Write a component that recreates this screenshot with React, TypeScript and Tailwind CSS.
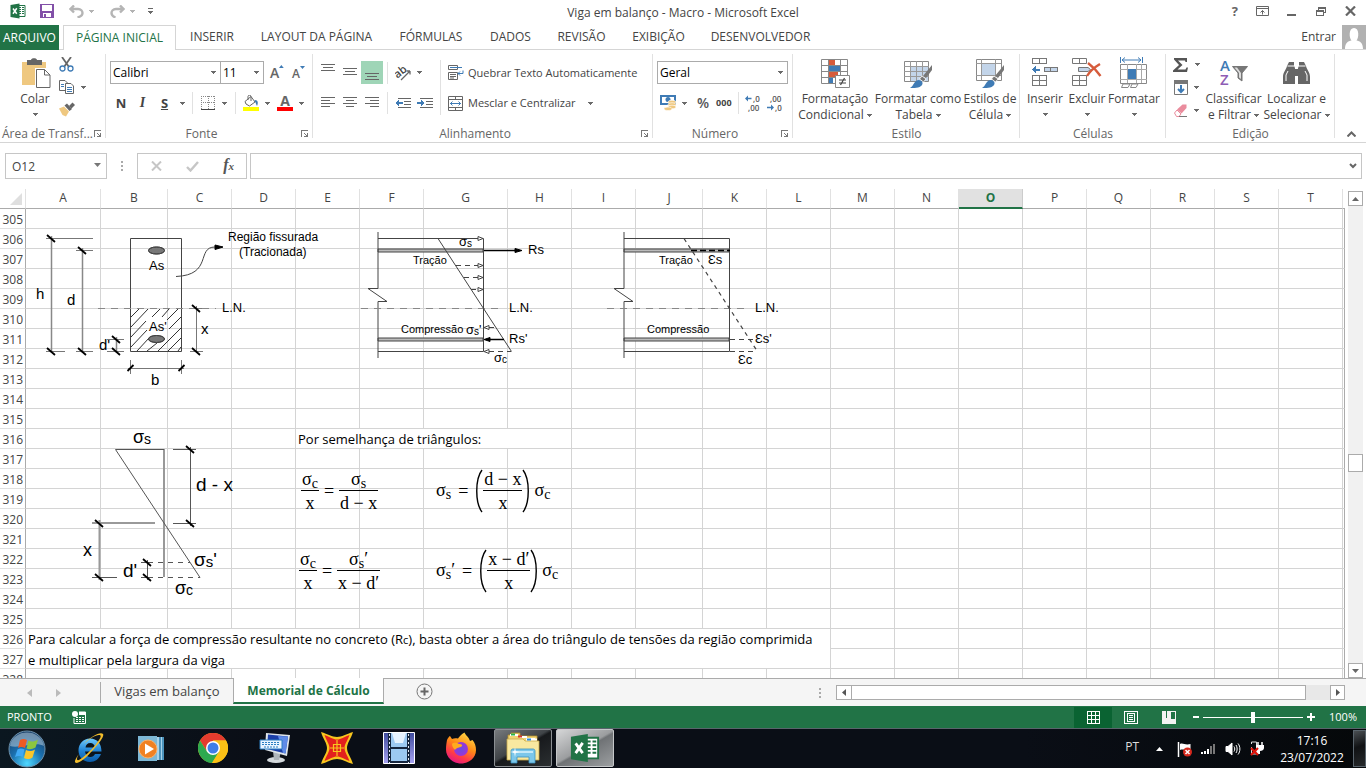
import React from "react";

type Kids = { children?: React.ReactNode };

/* ---------- small shared pieces ---------- */

const Caret = ({ className = "" }: { className?: string }) => (
  <svg className={"shrink-0 " + className} width="5" height="3" viewBox="0 0 5 3" shapeRendering="crispEdges" aria-hidden="true">
    <path d="M0 0H5V1H4V2H3V3H2V2H1V1H0Z" fill="#6a6a6a" />
  </svg>
);

const Launcher = ({ label }: { label: string }) => (
  <button aria-label={label} className="absolute right-[5px] bottom-[5px]">
    <svg className="block" width="7" height="7" viewBox="0 0 7 7" shapeRendering="crispEdges">
      <path d="M0 7V0H7V1H1V7ZM3 3H4V4H5V5H6V3H7V7H3V6H5V5H4V4H3Z" fill="#777" />
    </svg>
  </button>
);

const Group = ({ label, width, launcher, children }: Kids & { label: string; width: string; launcher?: boolean }) => (
  <section aria-label={label} className={"relative flex shrink-0 flex-col " + width}>
    <div className="flex h-[76px]">{children}</div>
    <div className={"text-center leading-4 whitespace-nowrap text-[#666] " + (launcher ? "pr-[18px] pl-[2px]" : "px-1")}>{label}</div>
    {launcher && <Launcher label={"Opções de " + label} />}
    <span className="absolute top-1 right-0 h-[84px] w-px bg-[#e1e1e1]" />
  </section>
);

const Sep = ({ className = "h-[22px]" }: { className?: string }) => <span className={"w-px shrink-0 bg-[#e1e1e1] " + className} />;

const BigButton = ({ icon, lines, width, caretInline }: { icon: React.ReactNode; lines: string[]; width: string; caretInline?: boolean }) => (
  <button className={"flex shrink-0 flex-col items-center whitespace-nowrap leading-4 " + width}>
    <span className="flex h-[41px] items-center pb-1 pt-2">{icon}</span>
    {lines.map((l, i) => (
      <span key={l} className="flex items-center gap-[3px]">
        {l}
        {caretInline && i === lines.length - 1 && <Caret />}
      </span>
    ))}
    {!caretInline && <Caret className="mt-[6px]" />}
  </button>
);

const Lines = ({ rows, className = "" }: { rows: [number, number][]; className?: string }) => (
  <svg className={className} width="14" height="14" viewBox="0 0 14 14" shapeRendering="crispEdges">
    {rows.map(([x, w], i) => (
      <rect key={i} x={x} y={i * 3 + 1} width={w} height="1" fill="#666" />
    ))}
  </svg>
);

const ExcelLogo = ({ size }: { size: number }) => (
  <svg width={size} height={size} viewBox="0 0 32 32">
    <path d="M17 5H30V27H17Z" fill="#fff" stroke="#217346" strokeWidth="2" />
    <path d="M18 8H22V10H18ZM24 8H28V10H24ZM18 12H22V14H18ZM24 12H28V14H24ZM18 16H22V18H18ZM24 16H28V18H24ZM18 20H22V22H18ZM24 20H28V22H24Z" fill="#217346" />
    <path d="M1 4L19 1V31L1 28Z" fill="#217346" />
    <path d="M6 11L13.500 21.500M13.500 10.500L6 21.500" stroke="#fff" strokeWidth="3" />
  </svg>
);

/* ---------- title bar ---------- */

const TitleBar = () => (
  <header className="relative flex h-[25px] shrink-0 items-start pt-[3px]">
    <div className="flex h-4 items-center pl-[10px]">
      <ExcelLogo size={16} />
      <button aria-label="Salvar" className="ml-[14px]">
        <svg width="14" height="14" viewBox="0 0 14 14">
          <path d="M0 0H14V14H0Z" fill="#8250a8" />
          <path d="M2 1H12V7H2Z" fill="#fff" />
          <path d="M3 9H11V13H3Z" fill="#fff" />
          <path d="M4 10H6V13H4Z" fill="#8250a8" />
        </svg>
      </button>
      <button aria-label="Desfazer" className="ml-[15px] flex items-center gap-[5px]">
        <svg width="15" height="13" viewBox="0 0 15 13" fill="none" stroke="#b5b5b5" strokeWidth="2.400">
          <path d="M5 0.500L1.500 4L5 7.500M2 4H9C12 4 13.500 6 13.500 8C13.500 10 12 11.500 8.500 12.500" />
        </svg>
        <Caret className="opacity-50" />
      </button>
      <button aria-label="Refazer" className="ml-4 flex items-center gap-[5px]">
        <svg width="15" height="13" viewBox="0 0 15 13" fill="none" stroke="#b5b5b5" strokeWidth="2.400">
          <path d="M10 0.500L13.500 4L10 7.500M13 4H6C3 4 1.500 6 1.500 8C1.500 10 3 11.500 5.500 12.500" />
        </svg>
        <Caret className="opacity-50" />
      </button>
      <button aria-label="Personalizar barra" className="ml-[13px] flex flex-col gap-[2px]">
        <span className="h-px w-[5px] bg-[#666]" />
        <Caret />
      </button>
    </div>
    <h1 className="pointer-events-none absolute inset-x-0 top-[5px] text-center leading-4 text-[#444]">Viga em balanço - Macro - Microsoft Excel</h1>
    <div className="ml-auto flex h-4 items-center pr-[10px] text-[#666]">
      <button aria-label="Ajuda" className="text-[13px] leading-4 font-bold">?</button>
      <button aria-label="Opções de exibição" className="ml-[18px]">
        <svg width="13" height="10" viewBox="0 0 13 10" fill="none" stroke="#666">
          <path d="M0.500 0.500H12.500V9.500H0.500ZM1 2.500H12M6.500 8.500V4.500M4.500 6.500L6.500 4.500L8.500 6.500" />
        </svg>
      </button>
      <button aria-label="Minimizar" className="ml-[18px] h-[11px] pt-2">
        <span className="block h-[2px] w-[9px] bg-[#666]" />
      </button>
      <button aria-label="Restaurar" className="ml-5">
        <svg width="10" height="9" viewBox="0 0 10 9" fill="none" stroke="#666" shapeRendering="crispEdges">
          <path d="M0.500 3.500H7.500V8.500H0.500ZM0 4.500H8M2.500 3V0.500H9.500V5.500H8M2 1.500H10" />
        </svg>
      </button>
      <button aria-label="Fechar" className="ml-[19px]">
        <svg width="11" height="10" viewBox="0 0 11 10" stroke="#666" strokeWidth="2.200">
          <path d="M1 0.500L10 9.500M10 0.500L1 9.500" />
        </svg>
      </button>
    </div>
  </header>
);

/* ---------- ribbon tabs ---------- */

const tabs: [string, string][] = [
  ["INSERIR", "w-[72px]"],
  ["LAYOUT DA PÁGINA", "w-[137px]"],
  ["FÓRMULAS", "w-[92px]"],
  ["DADOS", "w-[67px]"],
  ["REVISÃO", "w-[75px]"],
  ["EXIBIÇÃO", "w-[79px]"],
  ["DESENVOLVEDOR", "w-[125px]"],
];

const RibbonTabs = () => (
  <nav className="flex h-[25px] shrink-0 border-b border-[#d5d5d5] whitespace-nowrap text-[#444]">
    <button className="h-[25px] w-[59px] shrink-0 bg-[#217346] text-white">ARQUIVO</button>
    <button className="ml-1 h-[25px] w-[113px] shrink-0 border border-b-0 border-[#d5d5d5] bg-white text-[#217346]">PÁGINA INICIAL</button>
    {tabs.map(([t, w]) => (
      <button key={t} className={"shrink-0 " + w}>{t}</button>
    ))}
    <button className="ml-auto pr-[6px]">Entrar</button>
    <svg className="shrink-0" width="24" height="24" viewBox="0 0 24 24">
      <path d="M0 0H24V24H0Z" fill="#b1b1b1" />
      <path d="M3 24C3 18 6 16 9.500 15.500C7 13 6.500 3 12 3C17.500 3 17 13 14.500 15.500C18 16 21 18 21 24Z" fill="#fff" />
    </svg>
  </nav>
);

/* ---------- ribbon ---------- */

const Combo = ({ value, label, className }: { value: string; label: string; className: string }) => (
  <span className={"relative block shrink-0 " + className}>
    <select aria-label={label} defaultValue={value} className="block h-[23px] w-full appearance-none border border-[#ababab] bg-white pl-[2px] text-black">
      <option>{value}</option>
    </select>
    <Caret className="pointer-events-none absolute top-[10px] right-[5px]" />
  </span>
);

const CellGridIcon = ({ fill }: { fill: React.ReactNode }) => (
  <svg width="30" height="30" viewBox="0 0 30 30">
    {fill}
  </svg>
);

const BrushOverlay = () => (
  <g>
    <path d="M29 7V12L23 20L20 18Z" fill="#777" />
    <path d="M19 18L23 21L20.500 24L16.500 21Z" fill="#777" stroke="#fff" strokeWidth="0.800" />
    <path d="M7 30C11 28 11 22 16 22C20 22.500 20.500 26 18 28C15 30.500 10 30 7 30Z" fill="#3f7bb5" />
  </g>
);

const Ribbon = () => (
  <div className="flex h-[93px] shrink-0 overflow-hidden border-b border-[#d5d5d5] text-[#444]">
    <Group label="Área de Transf..." width="w-[106px]" launcher>
      <button className="ml-[18px] flex w-[34px] flex-col items-center leading-4">
        <span className="flex h-[41px] items-center pt-2 pb-1 pl-[3px]">
          <svg width="29" height="30" viewBox="0 0 29 30">
            <path d="M0 4H24V27H0Z" fill="#efc880" />
            <path d="M5 2H9C9 -0.500 15 -0.500 15 2H20V7H5Z" fill="#666" />
            <path d="M13 10H24V28H13Z" fill="#fff" />
            <path d="M14.500 11.500H22.500L28 17V29.500H14.500Z" fill="#fff" stroke="#666" />
            <path d="M22.500 11.500V17H28" fill="none" stroke="#666" />
          </svg>
        </span>
        Colar
        <Caret className="mt-[6px]" />
      </button>
      <div className="ml-[7px] flex flex-col items-start">
        <button aria-label="Recortar" className="mt-[7px] h-[15px]">
          <svg width="15" height="15" viewBox="0 0 15 15" fill="none">
            <path d="M3 0L10 10M12 0L5 10" stroke="#666" strokeWidth="1.800" />
            <circle cx="3.500" cy="11.500" r="2.500" stroke="#3f7bb5" strokeWidth="1.300" />
            <circle cx="11.500" cy="11.500" r="2.500" stroke="#3f7bb5" strokeWidth="1.300" />
          </svg>
        </button>
        <button aria-label="Copiar" className="mt-2 flex items-center gap-[7px]">
          <svg width="15" height="14" viewBox="0 0 15 14" fill="#fff" stroke="#666">
            <path d="M0.500 0.500H6L8.500 3V10.500H0.500Z" />
            <path d="M2 4.500H5M2 6.500H5" stroke="#3f7bb5" />
            <path d="M6.500 3.500H12L14.500 6V13.500H6.500Z" />
            <path d="M8 7.500H13M8 9.500H13M8 11.500H13" stroke="#3f7bb5" />
          </svg>
          <Caret />
        </button>
        <button aria-label="Pincel de Formatação" className="mt-2">
          <svg width="16" height="15" viewBox="0 0 16 15">
            <path d="M0 6.500L5 4.500L10 9.500L7 14.500L3.500 13Z" fill="#efc880" />
            <path d="M5.500 3.500L8 1.500L13 7L10.500 9Z" fill="#666" />
            <path d="M10 4L13.500 0.500L16 3L12.500 6.500Z" fill="#666" />
          </svg>
        </button>
      </div>
    </Group>

    <Group label="Fonte" width="w-[207px]" launcher>
      <div className="flex flex-col gap-2 pt-[11px] pl-1">
        <div className="flex h-[23px] items-center">
          <Combo value="Calibri" label="Fonte" className="w-[111px]" />
          <Combo value="11" label="Tamanho" className="-ml-px w-[44px]" />
          <button aria-label="Aumentar fonte" className="ml-[6px] flex w-[14px] text-[14px] leading-4 font-semibold text-[#666]">
            A
            <svg width="5" height="3" viewBox="0 0 5 3"><path d="M0 3L2.500 0L5 3Z" fill="#3f7bb5" /></svg>
          </button>
          <button aria-label="Diminuir fonte" className="ml-2 flex w-[14px] pt-[2px] text-[12px] leading-4 font-semibold text-[#666]">
            A
            <svg width="5" height="3" viewBox="0 0 5 3"><path d="M0 0L2.500 3L5 0Z" fill="#3f7bb5" /></svg>
          </button>
        </div>
        <div className="flex h-[22px] items-center text-[13px]">
          <button aria-label="Negrito" className="w-[22px] font-bold">N</button>
          <button aria-label="Itálico" className="w-[21px] font-['Liberation_Serif',serif] text-[14px] font-bold italic">I</button>
          <button aria-label="Sublinhado" className="flex w-[36px] items-center justify-center gap-3 pl-1 font-bold"><span className="underline">S</span><Caret /></button>
          <Sep className="ml-[3px] h-[22px]" />
          <button aria-label="Bordas" className="ml-2 flex items-center gap-[7px]">
            <svg width="14" height="14" viewBox="0 0 14 14" fill="none" stroke="#888" shapeRendering="crispEdges">
              <path d="M0.500 0V13M13.500 0V13M0 0.500H14M7 0V13M0 6.500H14" strokeDasharray="1 1" />
              <path d="M0 13.500H14" stroke="#444" />
            </svg>
            <Caret />
          </button>
          <Sep className="ml-[8px] h-[22px]" />
          <button aria-label="Cor de preenchimento" className="ml-[7px] flex items-center gap-[6px]">
            <svg width="16" height="16" viewBox="0 0 16 16">
              <path d="M2 6.500L8 1.500L12 7L6.500 11L3 9Z" fill="#fff" stroke="#666" />
              <path d="M5 5V1.500C5 -0.200 8 -0.200 8 1.500V6" fill="none" stroke="#666" />
              <path d="M12 5C15 5 15.500 8 14 11C13 9 13 8 11.500 6Z" fill="#3f7bb5" />
              <path d="M0 12H16V16H0Z" fill="#ff0" />
            </svg>
            <Caret />
          </button>
          <button aria-label="Cor da fonte" className="ml-[7px] flex items-center gap-[6px]">
            <span className="flex h-4 w-4 flex-col items-center border-b-4 border-[#f00] text-[14px] leading-3 font-bold text-[#666]">A</span>
            <Caret />
          </button>
        </div>
      </div>
    </Group>

    <Group label="Alinhamento" width="w-[340px]" launcher>
      <div className="flex flex-col gap-2 pt-[11px] pl-1">
        <div className="flex h-[23px] items-center">
          <button aria-label="Alinhar em cima" className="flex h-[23px] w-[22px] justify-center pt-[2px]"><Lines rows={[[0, 14], [2, 10], [0, 14]]} /></button>
          <button aria-label="Alinhar no meio" className="flex h-[23px] w-[22px] justify-center pt-[6px]"><Lines rows={[[0, 14], [2, 10], [0, 14]]} /></button>
          <button aria-label="Alinhar embaixo" className="flex h-[23px] w-[22px] justify-center bg-[#9fd5b7] pt-[11px]"><Lines rows={[[0, 14], [2, 10], [0, 14]]} /></button>
          <Sep className="ml-1 h-[22px]" />
          <button aria-label="Orientação" className="ml-[7px] flex items-center gap-1">
            <svg width="18" height="18" viewBox="0 0 18 18">
              <text x="0" y="12" fontSize="11" fontWeight="600" fill="#444" transform="rotate(-38 5 10)">ab</text>
              <path d="M6 16L15 7M15 7H11.500M15 7V10.500" stroke="#666" strokeWidth="1.300" fill="none" />
            </svg>
            <Caret />
          </button>
        </div>
        <div className="flex h-[22px] items-center">
          <button aria-label="Alinhar à esquerda" className="flex w-[22px] justify-center"><Lines rows={[[0, 14], [0, 9], [0, 14], [0, 9]]} /></button>
          <button aria-label="Centralizar" className="flex w-[22px] justify-center"><Lines rows={[[0, 14], [3, 8], [0, 14], [3, 8]]} /></button>
          <button aria-label="Alinhar à direita" className="flex w-[22px] justify-center"><Lines rows={[[0, 14], [5, 9], [0, 14], [5, 9]]} /></button>
          <Sep className="ml-1 h-[22px]" />
          <button aria-label="Diminuir recuo" className="ml-[7px]">
            <svg width="16" height="11" viewBox="0 0 16 11" shapeRendering="crispEdges">
              <path d="M3 0H16V1H3ZM9 3H16V4H9ZM9 6H16V7H9ZM3 9H16V10H3Z" fill="#666" />
              <path d="M0 5L4 2V4H8V6H4V8Z" fill="#3f7bb5" />
            </svg>
          </button>
          <button aria-label="Aumentar recuo" className="ml-[6px]">
            <svg width="16" height="11" viewBox="0 0 16 11" shapeRendering="crispEdges">
              <path d="M3 0H16V1H3ZM9 3H16V4H9ZM9 6H16V7H9ZM3 9H16V10H3Z" fill="#666" />
              <path d="M8 5L4 2V4H0V6H4V8Z" fill="#3f7bb5" />
            </svg>
          </button>
        </div>
      </div>
      <Sep className="mt-[10px] ml-[7px] h-[55px]" />
      <div className="flex flex-col gap-2 pt-[11px] pl-[7px] text-[11px]">
        <button className="flex h-[23px] items-center gap-1 whitespace-nowrap">
          <svg width="16" height="16" viewBox="0 0 16 16" fill="none" stroke="#666">
            <path d="M0.500 0.500H9.500V4.500H0.500ZM0.500 7.500H9.500V14.500H0.500ZM2 9.500H8M2 11.500H8M2 13H6" />
            <path d="M2 2.500H14M15 5.500V8.500H10M12 6.500L10 8.500L12 10.500" stroke="#3f7bb5" />
          </svg>
          Quebrar Texto Automaticamente
        </button>
        <button className="flex h-[22px] items-center gap-1 whitespace-nowrap">
          <svg width="16" height="15" viewBox="0 0 16 15" fill="none" stroke="#666">
            <path d="M0.500 0.500H14.500V14.500H0.500ZM0.500 3.500H14.500M0.500 11.500H14.500M7.500 0V3.500M7.500 11.500V14.500" />
            <path d="M2 7.500H13M4.500 5.500L2.500 7.500L4.500 9.500M10.500 5.500L12.500 7.500L10.500 9.500" stroke="#3f7bb5" />
          </svg>
          Mesclar e Centralizar
          <Caret className="ml-2" />
        </button>
      </div>
    </Group>

    <Group label="Número" width="w-[140px]" launcher>
      <div className="flex flex-col gap-2 pt-[11px] pl-1">
        <Combo value="Geral" label="Formato de número" className="w-[131px]" />
        <div className="flex h-[22px] items-center">
          <button aria-label="Formato contábil" className="ml-[3px] flex items-center gap-[5px]">
            <svg width="17" height="16" viewBox="0 0 17 16">
              <path d="M0 0H16V10H0Z" fill="#3f7bb5" />
              <path d="M2 2H14V8H2Z" fill="#fff" />
              <circle cx="8" cy="4.500" r="2.500" fill="#3f7bb5" />
              <ellipse cx="12" cy="7" rx="4" ry="1.800" fill="#efc880" stroke="#fff" strokeWidth="0.600" />
              <ellipse cx="12" cy="9.500" rx="4" ry="1.800" fill="#efc880" stroke="#fff" strokeWidth="0.600" />
              <ellipse cx="12" cy="12" rx="4" ry="1.800" fill="#efc880" stroke="#fff" strokeWidth="0.600" />
              <ellipse cx="8" cy="13.800" rx="4" ry="1.800" fill="#efc880" stroke="#fff" strokeWidth="0.600" />
            </svg>
            <Caret />
          </button>
          <button aria-label="Porcentagem" className="ml-[10px] text-[14px] font-semibold text-[#555]">%</button>
          <button aria-label="Separador de milhares" className="ml-[7px] text-[9px] font-bold">000</button>
          <Sep className="ml-[6px] h-[22px]" />
          <button aria-label="Aumentar casas decimais" className="ml-[6px]">
            <svg width="16" height="18" viewBox="0 0 16 18">
              <path d="M0 4.500L3 1.500V3.800H6.500V5.200H3V7.500Z" fill="#3f7bb5" />
              <text x="8" y="8" fontSize="8" fontWeight="600" fill="#555">,0</text>
              <text x="3" y="17" fontSize="8" fontWeight="600" fill="#555">,00</text>
            </svg>
          </button>
          <button aria-label="Diminuir casas decimais" className="ml-[6px]">
            <svg width="16" height="18" viewBox="0 0 16 18">
              <text x="3" y="8" fontSize="8" fontWeight="600" fill="#555">,00</text>
              <path d="M7 13.500L4 10.500V12.800H0V14.200H4V16.500Z" fill="#3f7bb5" />
              <text x="8" y="17" fontSize="8" fontWeight="600" fill="#555">,0</text>
            </svg>
          </button>
        </div>
      </div>
    </Group>

    <Group label="Estilo" width="w-[227px]">
      <div className="w-[2px] shrink-0" />
      <BigButton
        width="w-[80px]"
        caretInline
        lines={["Formatação", "Condicional"]}
        icon={
          <CellGridIcon
            fill={
              <g>
                <path d="M1.500 1.500H27.500V25.500H1.500Z" fill="#fff" stroke="#888" />
                <path d="M1 7.500H28M1 13.500H28M1 19.500H28M8.500 1V25M20.500 1V25" stroke="#888" />
                <path d="M9 2H15V7H9ZM9 14H18V19H9Z" fill="#d65b3b" />
                <path d="M9 8H20V13H9ZM9 20H13V25H9Z" fill="#3f7bb5" />
                <path d="M15.500 17.500H29.500V29.500H15.500Z" fill="#fff" stroke="#888" />
                <path d="M19 22H26M19 25H26M24.500 20L20.500 27" stroke="#444" strokeWidth="1.200" />
              </g>
            }
          />
        }
      />
      <BigButton
        width="w-[86px]"
        caretInline
        lines={["Formatar como", "Tabela"]}
        icon={
          <CellGridIcon
            fill={
              <g>
                <path d="M1.500 3.500H25.500V23.500H1.500Z" fill="#fff" stroke="#888" />
                <path d="M8 9H25V23H8Z" fill="#c3d5ea" />
                <path d="M1 8.500H26M1 13.500H26M1 18.500H26M7.500 3V23M13.500 3V23M19.500 3V23" stroke="#999" />
                <BrushOverlay />
              </g>
            }
          />
        }
      />
      <BigButton
        width="w-[58px]"
        caretInline
        lines={["Estilos de", "Célula"]}
        icon={
          <CellGridIcon
            fill={
              <g>
                <path d="M1.500 1.500H26.500V22.500H1.500Z" fill="#fff" stroke="#888" />
                <path d="M7 6H20V17H7Z" fill="#c3d5ea" />
                <path d="M1 5.500H26M1 17.500H26M6.500 1V22M20.500 1V22" stroke="#999" />
                <BrushOverlay />
              </g>
            }
          />
        }
      />
    </Group>

    <Group label="Células" width="w-[146px]">
      <div className="w-1 shrink-0" />
      <BigButton
        width="w-[42px]"
        lines={["Inserir"]}
        icon={
          <svg width="27" height="29" viewBox="0 0 27 29" shapeRendering="crispEdges">
            <path d="M0.500 0.500H14.500V5.500H0.500ZM7.500 0.500V5.500M0.500 17.500H14.500V27.500H0.500ZM7.500 17.500V27.500M0.500 22.500H14.500" fill="#fff" stroke="#777" />
            <path d="M12.500 9.500H25.500V13.500H12.500ZM18.500 9.500V13.500" fill="#c3d5ea" stroke="#777" />
            <path d="M0 11.500L4 8V10.500H8V12.500H4V15Z" fill="#3f7bb5" />
          </svg>
        }
      />
      <BigButton
        width="w-[42px]"
        lines={["Excluir"]}
        icon={
          <svg width="30" height="29" viewBox="0 0 30 29">
            <path d="M0.500 0.500H14.500V5.500H0.500ZM7.500 0.500V5.500M0.500 17.500H14.500V27.500H0.500ZM7.500 17.500V27.500M0.500 22.500H14.500" fill="#fff" stroke="#777" />
            <path d="M6.500 9.500H16L18.500 11.500L16 13.500H6.500Z" fill="#c3d5ea" stroke="#777" />
            <path d="M16 5C20 8 25 13 28.500 18M28 6C23 9 18 13 15 18" stroke="#d65b3b" strokeWidth="2.400" fill="none" />
          </svg>
        }
      />
      <BigButton
        width="w-[52px]"
        lines={["Formatar"]}
        icon={
          <svg width="30" height="31" viewBox="0 0 30 31">
            <path d="M1.500 0V6M23.500 0V6M3 3H22M6 0.500L3 3L6 5.500M19 0.500L22 3L19 5.500" stroke="#3f7bb5" fill="none" />
            <path d="M1.500 7.500H27.500V26.500H1.500Z" fill="#fff" stroke="#888" />
            <path d="M1 12.500H28M1 22.500H28M8.500 7V26M17.500 7V26M22.500 7V26" stroke="#aaa" />
            <path d="M9 12H17V22H9Z" fill="#3f7bb5" />
            <path d="M2.500 30.500L4 27H11L9 30.500ZM11.500 30.500L13 27H19L17 30.500Z" fill="#fff" stroke="#888" />
          </svg>
        }
      />
    </Group>

    <Group label="Edição" width="w-[169px]">
      <div className="ml-[7px] flex w-[30px] flex-col">
        <button aria-label="Soma" className="mt-[7px] flex h-[15px] items-center gap-[7px]">
          <svg width="15" height="14" viewBox="0 0 15 14"><path d="M1 0H14V4H12.500L12 2.500H5L9.500 7L4.500 11.500H12.500L13.500 9.500H15L14 14H0V12.500L6 7L1 1.500Z" fill="#555" /></svg>
          <Caret />
        </button>
        <button aria-label="Preencher" className="mt-2 flex h-[15px] items-center gap-[6px]">
          <svg width="15" height="15" viewBox="0 0 15 15">
            <path d="M1.500 0.500H14.500V14.500H1.500Z" fill="#fff" stroke="#777" />
            <path d="M1 0H15V4H1Z" fill="#777" />
            <path d="M8 5V12M5 9L8 12L11 9" stroke="#3f7bb5" strokeWidth="2" fill="none" />
          </svg>
          <Caret />
        </button>
        <button aria-label="Limpar" className="mt-2 flex h-[15px] items-center gap-[6px]">
          <svg width="15" height="13" viewBox="0 0 15 13">
            <path d="M4 5.500L9.500 0.500H13.500V4L8.500 9.500Z" fill="#ea8c9d" />
            <path d="M1.500 9L4 6L8 10L6 12.500H3.500Z" fill="#fff" stroke="#ea8c9d" />
            <path d="M6 12.500H14" stroke="#777" />
          </svg>
          <Caret />
        </button>
      </div>
      <BigButton
        width="w-[61px]"
        caretInline
        lines={["Classificar", "e Filtrar"]}
        icon={
          <svg width="30" height="28" viewBox="0 0 30 28">
            <text x="1" y="12" fontSize="15" fontWeight="600" fill="#3f7bb5">A</text>
            <text x="1" y="26" fontSize="15" fontWeight="600" fill="#8e5db5">Z</text>
            <path d="M13.500 7.500H28.500L23 14V22L19 19V14Z" fill="#777" stroke="#777" />
            <path d="M15.500 8.500H18L22 14V20L20 18.500V14Z" fill="#ddd" />
          </svg>
        }
      />
      <BigButton
        width="w-[65px]"
        caretInline
        lines={["Localizar e", "Selecionar"]}
        icon={
          <svg width="27" height="26" viewBox="0 0 27 26" fill="#666">
            <path d="M6 2H11V6L12 8V24H0V17C0 12 3 10 4 6ZM16 2H21L23 6C24 10 27 12 27 17V24H15V8L16 6ZM12 9H15V16H12Z" />
            <path d="M4.500 6H11M16 6H22.500M3 21V15L5 11M24 21V15L22 11" stroke="#fff" fill="none" />
          </svg>
        }
      />
    </Group>
    <button aria-label="Recolher faixa de opções" className="ml-auto self-end pr-[10px] pb-[5px]">
      <svg width="9" height="6" viewBox="0 0 9 6" fill="none" stroke="#666" strokeWidth="2"><path d="M0.500 5.500L4.500 1.500L8.500 5.500" /></svg>
    </button>
  </div>
);

/* ---------- formula bar ---------- */

const FormulaBar = () => (
  <div className="flex h-[46px] shrink-0 items-center pr-[4px] pl-[5px]">
    <div className="relative w-[102px] shrink-0">
      <input aria-label="Caixa de nome" defaultValue="O12" className="h-[26px] w-full border border-[#c6c6c6] pl-[6px] text-[#444]" />
      <svg className="absolute top-[10px] right-[6px]" width="7" height="4" viewBox="0 0 7 4"><path d="M0 0H7L3.500 4Z" fill="#777" /></svg>
    </div>
    <svg className="ml-[14px] shrink-0" width="2" height="10" viewBox="0 0 2 10"><path d="M0 0H2V2H0ZM0 4H2V6H0ZM0 8H2V10H0Z" fill="#aaa" /></svg>
    <div className="ml-[14px] flex h-[26px] w-[110px] shrink-0 items-center justify-between border border-[#c6c6c6] pr-3 pl-[13px]">
      <button aria-label="Cancelar"><svg width="11" height="10" viewBox="0 0 11 10" stroke="#c6c6c6" strokeWidth="2"><path d="M1 0.500L10 9.500M10 0.500L1 9.500" /></svg></button>
      <button aria-label="Inserir"><svg width="13" height="11" viewBox="0 0 13 11" stroke="#c6c6c6" strokeWidth="2.400" fill="none"><path d="M1 6L4.500 9.500L12 1" /></svg></button>
      <button aria-label="Inserir função" className="pb-[2px] font-['Liberation_Serif',serif] text-[16px] leading-4 font-bold text-[#555] italic">f<span className="text-[11px]">x</span></button>
    </div>
    <div className="relative ml-[3px] min-w-0 flex-1">
      <input aria-label="Barra de fórmulas" className="block h-[26px] w-full border border-[#c6c6c6] px-1" />
      <svg className="absolute top-[10px] right-[5px]" width="8" height="6" viewBox="0 0 8 6" fill="none" stroke="#666" strokeWidth="2"><path d="M1 1L4 4L7 1" /></svg>
    </div>
  </div>
);

/* ---------- drawings on the sheet ---------- */

/* 45° dimension ticks at the given points */
const Ticks = ({ at, flip }: { at: [number, number][]; flip?: boolean }) => (
  <path d={at.map(([x, y]) => (flip ? `M${x - 3} ${y + 3}L${x + 3} ${y - 3}` : `M${x - 4} ${y - 3}L${x + 4} ${y + 4}`)).join("")} stroke="#000" strokeWidth="1.800" />
);

const figText = "font-['Liberation_Sans',sans-serif]";

const SectionFigure = () => (
  <svg className={"pointer-events-none absolute top-[36px] left-[28px] " + figText} width="300" height="170" viewBox="28 225 300 170" fill="none" stroke="#444">
    <defs>
      <pattern id="fine" width="2" height="2" patternUnits="userSpaceOnUse" patternTransform="rotate(45)">
        <path d="M1 0V2" stroke="#333" strokeWidth="1" />
      </pattern>
    </defs>
    <path d="M51.500 236V353M82.500 248V353M116.500 337V353" stroke="#888" strokeWidth="1.500" />
    <path d="M46 238.500H93M46 351.500H65M76 250.500H93M76 351.500H93M107 339.500H124M107 351.500H124M190 308.500H203M190 351.500H203M196.500 306V353M130.500 360V374M181.500 360V374M128 368.500H184" stroke="#777" />
    <path
      d="M131 317L139 309M131 327L148 309M131 337L146 321M131 347L147 330M137 351L149 338M147 351L157 343M158 351L181 328M168 351L181 338M178 351L181 347M169 329L181 317M167 320L178 309M152 317L160 309M162 317L169 309"
      stroke="#333"
    />
    <path d="M130.500 238.500H181.500V351.500H130.500Z" />
    <path d="M98 308.500H216" stroke="#888" strokeDasharray="7 6" />
    <ellipse cx="156.500" cy="250.500" rx="8" ry="3.500" fill="#bbb" />
    <ellipse cx="156.500" cy="250.500" rx="8" ry="3.500" fill="url(#fine)" />
    <ellipse cx="156.500" cy="339" rx="8" ry="3.500" fill="#bbb" />
    <ellipse cx="156.500" cy="339" rx="8" ry="3.500" fill="url(#fine)" />
    <path d="M176 276.500C213 275 196 247 215 247" />
    <path d="M215 245V249.500L223 247Z" fill="#000" stroke="#000" />
    <Ticks at={[[51, 238], [51, 351], [82, 250], [82, 351], [116, 339], [116, 351], [196, 308], [196, 351]]} />
    <Ticks flip at={[[130.500, 368], [181.500, 368]]} />
    <g fill="#000" stroke="none" fontSize="13">
      <text x="36" y="299" fontSize="15">h</text>
      <text x="67" y="305" fontSize="15">d</text>
      <text x="99" y="350" fontSize="15">d'</text>
      <text x="201" y="334" fontSize="15">x</text>
      <text x="151" y="385" fontSize="15">b</text>
      <text x="149" y="270">As</text>
      <text x="149" y="331">As'</text>
      <text x="222" y="312">L.N.</text>
      <text x="228" y="241" fontSize="12">Região fissurada</text>
      <text x="239" y="256" fontSize="12">(Tracionada)</text>
    </g>
  </svg>
);

/* longitudinal beam outline shared by the stress and strain diagrams */
const Beam = () => (
  <g>
    <path d="M378 249H483V252H378ZM378 338H483V341H378Z" fill="#bbb" stroke="#444" />
    <path d="M378 232V288.500H368L387 301.500H378V358" />
    <path d="M378 238.500H483.500V351.500H378" />
    <path d="M361 308.500H502" stroke="#888" strokeDasharray="7 6" />
    <g fill="#000" stroke="none">
      <text x="413" y="264" fontSize="11">Tração</text>
      <text x="401" y="333" fontSize="11">Compressão</text>
      <text x="509" y="312" fontSize="13">L.N.</text>
    </g>
  </g>
);

const StressFigure = () => (
  <svg className={"pointer-events-none absolute top-[36px] left-[360px] " + figText} width="190" height="145" viewBox="360 225 190 145" fill="none" stroke="#444">
    <Beam />
    <path d="M438 238.500L511.500 351.500" />
    <path d="M456 265.500H478M464 277.500H478M471 289.500H478M489 327.500H496M489 351.500H511" strokeDasharray="5 4" />
    <path d="M478 236.500V240.500L483 238.500ZM478 263.500V267.500L483 265.500ZM478 275.500V279.500L483 277.500ZM478 287.500V291.500L483 289.500ZM489 325.500V329.500L484 327.500ZM489 349.500V353.500L484 351.500Z" fill="#fff" />
    <path d="M484 250.500H516M490 339.500H504" stroke="#000" strokeWidth="1.600" />
    <path d="M515 248.500V252.500L522 250.500ZM490 337.500V341.500L484 339.500Z" fill="#000" stroke="#000" />
    <g fill="#000" stroke="none" fontSize="13">
      <text x="528" y="254">Rs</text>
      <text x="509" y="343">Rs'</text>
      <text x="459" y="246">σ<tspan fontSize="10" dy="1">s</tspan></text>
      <text x="466" y="334">σ<tspan fontSize="10" dy="1">s</tspan><tspan dy="-1">'</tspan></text>
      <text x="494" y="362">σ<tspan fontSize="10" dy="1">c</tspan></text>
    </g>
  </svg>
);

const StrainFigure = () => (
  <svg className={"pointer-events-none absolute top-[36px] left-[606px] " + figText} width="190" height="145" viewBox="360 225 190 145" fill="none" stroke="#444">
    <Beam />
    <path d="M438 238.500L511.500 351.500" strokeDasharray="4 4" strokeWidth="1.200" />
    <path d="M484 339.500H508M484 351.500H511" strokeDasharray="5 4" />
    <path d="M445 250.500H484" stroke="#000" strokeDasharray="6 3" strokeWidth="1.400" />
    <g fill="#000" stroke="none" fontSize="13">
      <text x="462" y="264">Ɛs</text>
      <text x="509" y="343">Ɛs'</text>
      <text x="492" y="364">Ɛc</text>
    </g>
  </svg>
);

const TriangleFigure = () => (
  <svg className={"pointer-events-none absolute top-[236px] left-[75px] " + figText} width="170" height="180" viewBox="75 425 170 180" fill="none" stroke="#555">
    <path d="M164 449V577M92 523H155M99.500 520V580" stroke="#999" strokeWidth="2" />
    <path d="M164 449.500H115.500L200 577.500" />
    <path d="M173 449.500H196M173 523.500H196M190.500 447V526M92 577.500H117M141 562.500H153M147.500 560V580M141 577.500H153" />
    <path d="M158 562.500H190M158 577.500H200" strokeDasharray="5 5" />
    <Ticks at={[[190, 449], [190, 523], [99, 523], [99, 577], [147, 562], [147, 577]]} />
    <g fill="#000" stroke="none" fontSize="18">
      <text x="133" y="443">σ<tspan fontSize="14" dy="1">s</tspan></text>
      <text x="196" y="491" fontSize="19">d - x</text>
      <text x="83" y="556">x</text>
      <text x="123" y="577" fontSize="19">d'</text>
      <text x="194" y="566" fontSize="19">σ<tspan fontSize="15" dy="1">s</tspan><tspan dy="-1">'</tspan></text>
      <text x="175" y="594">σ<tspan fontSize="14" dy="1">c</tspan></text>
    </g>
  </svg>
);

const Sigma = ({ sub, prime }: { sub: string; prime?: boolean }) => (
  <span>σ<span className="relative top-[3px] text-[14px]">{sub}</span>{prime && "′"}</span>
);

const Frac = ({ top, bottom }: { top: React.ReactNode; bottom: React.ReactNode }) => (
  <span className="flex flex-col items-stretch text-center leading-5">
    <span className="h-[22px] border-b border-black px-px">{top}</span>
    <span className="h-[22px] px-px pt-[2px]">{bottom}</span>
  </span>
);

const Paren = ({ right }: { right?: boolean }) => (
  <svg width="8" height="44" viewBox="0 0 8 44" fill="none" stroke="#000" strokeWidth="1.400">
    <path d={right ? "M1 1C8 10 8 34 1 43" : "M7 1C0 10 0 34 7 43"} />
  </svg>
);

const Equation = ({ className, children }: Kids & { className: string }) => (
  <div className={"absolute flex items-center whitespace-nowrap font-['Liberation_Serif',serif] text-[18px] text-black " + className}>{children}</div>
);

/* ---------- worksheet ---------- */

const columns: [string, string][] = [
  ["A", "w-[75px]"], ["B", "w-[67px]"], ["C", "w-[64px]"], ["D", "w-[64px]"], ["E", "w-[64px]"],
  ["F", "w-[64px]"], ["G", "w-[84px]"], ["H", "w-[64px]"], ["I", "w-[64px]"], ["J", "w-[67px]"],
  ["K", "w-[64px]"], ["L", "w-[64px]"], ["M", "w-[64px]"], ["N", "w-[64px]"], ["O", "w-[64px]"],
  ["P", "w-[64px]"], ["Q", "w-[64px]"], ["R", "w-[64px]"], ["S", "w-[64px]"], ["T", "w-[64px]"],
];

const rows = Array.from({ length: 24 }, (_, i) => 305 + i);
const cell = "h-5 border-r border-b border-[#d4d4d4] p-0";
const cellText = "text-[13px] leading-5 text-black";

const cellsOf = (row: number) => {
  const blank = (from: number, to: number) => columns.slice(from, to).map(([c]) => <td key={c} className={cell} />);
  if (row === 316)
    return [
      ...blank(0, 4),
      <td key="text" colSpan={4} className={cell}>
        <div className={"h-[19px] pl-[2px] " + cellText}>Por semelhança de triângulos:</div>
      </td>,
      ...blank(8, 20),
    ];
  if (row === 326)
    return [
      <td key="text" colSpan={12} rowSpan={2} className={cell}>
        <p className={"h-[39px] pl-[2px] " + cellText}>
          Para calcular a força de compressão resultante no concreto (R<span className="text-[11px]">c</span>), basta obter a área do triângulo de tensões da região comprimida
          <br />e multiplicar pela largura da viga
        </p>
      </td>,
      ...blank(12, 20),
    ];
  if (row === 327) return blank(12, 20);
  return blank(0, 20);
};

const Sheet = () => (
  <div className="flex min-h-0 flex-1">
    <div className="relative min-w-0 flex-1 overflow-hidden">
      <table className="w-full table-fixed border-separate border-spacing-0">
        <colgroup>
          <col className="w-[26px]" />
          {columns.map(([c, w]) => (
            <col key={c} className={w} />
          ))}
          <col />
        </colgroup>
        <thead>
          <tr>
            <th className="h-5 border-r border-b border-r-[#e1e1e1] border-b-[#ababab] p-0">
              <svg className="ml-[10px]" width="12" height="12" viewBox="0 0 12 12"><path d="M12 0V12H0Z" fill="#dfdfdf" /></svg>
            </th>
            {columns.map(([c]) =>
              c === "O" ? (
                <th key={c} className="h-5 border-r border-b-2 border-r-[#ccc] border-b-[#217346] bg-[#e1e1e1] p-0 leading-[18px] font-bold text-[#217346]">{c}</th>
              ) : (
                <th key={c} className="h-5 border-r border-b border-r-[#e1e1e1] border-b-[#ababab] p-0 pb-px leading-[18px] font-normal text-[#444]">{c}</th>
              ),
            )}
            <th className="border-b border-[#ababab] p-0" />
          </tr>
        </thead>
        <tbody>
          {rows.map((r) => (
            <tr key={r}>
              <th className="h-5 border-r border-b border-r-[#ababab] border-b-[#e1e1e1] p-0 pt-[2px] pr-[2px] text-right leading-[17px] font-normal text-[#444]">{r}</th>
              {cellsOf(r)}
              <td className="border-r border-b border-r-[#ababab] border-b-[#d4d4d4] p-0" />
            </tr>
          ))}
        </tbody>
      </table>

      <SectionFigure />
      <StressFigure />
      <StrainFigure />
      <TriangleFigure />

      <Equation className="top-[280px] left-[301px] gap-[5px]">
        <Frac top={<Sigma sub="c" />} bottom="x" />
        =
        <Frac top={<Sigma sub="s" />} bottom="d − x" />
      </Equation>
      <Equation className="top-[280px] left-[436px]">
        <Sigma sub="s" />
        <span className="mx-[7px]">=</span>
        <Paren />
        <Frac top="d − x" bottom="x" />
        <Paren right />
        <span className="ml-1"><Sigma sub="c" /></span>
      </Equation>
      <Equation className="top-[360px] left-[299px] gap-[5px]">
        <Frac top={<Sigma sub="c" />} bottom="x" />
        =
        <Frac top={<Sigma sub="s" prime />} bottom="x − d′" />
      </Equation>
      <Equation className="top-[360px] left-[436px]">
        <Sigma sub="s" prime />
        <span className="mx-[7px]">=</span>
        <Paren />
        <Frac top="x − d′" bottom="x" />
        <Paren right />
        <span className="ml-1"><Sigma sub="c" /></span>
      </Equation>
    </div>

    <div className="flex w-[21px] shrink-0 flex-col px-[3px] pt-[2px]">
      <button aria-label="Rolar para cima" className="flex h-[15px] w-[15px] shrink-0 items-center justify-center border border-[#ababab] bg-white">
        <svg width="7" height="4" viewBox="0 0 7 4"><path d="M0 4H7L3.500 0Z" fill="#666" /></svg>
      </button>
      <div className="flex w-[15px] flex-1 flex-col bg-[#f1f1f1]">
        <div className="flex-[56]" />
        <div className="h-[18px] border border-[#ababab] bg-white" />
        <div className="flex-[43]" />
      </div>
      <button aria-label="Rolar para baixo" className="flex h-[15px] w-[15px] shrink-0 items-center justify-center border border-[#ababab] bg-white">
        <svg width="7" height="4" viewBox="0 0 7 4"><path d="M0 0H7L3.500 4Z" fill="#666" /></svg>
      </button>
    </div>
  </div>
);

/* ---------- sheet tabs ---------- */

const SheetTabs = () => (
  <div className="flex h-7 shrink-0 border-t border-[#ababab] bg-[#f5f5f5] pr-[21px] text-[13px] whitespace-nowrap text-[#444]">
    <div className="my-[3px] flex w-[101px] shrink-0 items-center border-r border-[#ababab] pl-[27px]">
      <button aria-label="Planilha anterior"><svg width="5" height="8" viewBox="0 0 5 8"><path d="M5 0V8L0 4Z" fill="#bbb" /></svg></button>
      <button aria-label="Próxima planilha" className="ml-6"><svg width="5" height="8" viewBox="0 0 5 8"><path d="M0 0V8L5 4Z" fill="#bbb" /></svg></button>
    </div>
    <button className="h-6 w-[132px] shrink-0">Vigas em balanço</button>
    <button className="-mt-px h-[26px] w-[151px] shrink-0 border-x border-b-2 border-x-[#ababab] border-b-[#217346] bg-white pt-px text-[12px] font-bold text-[#217346]">Memorial de Cálculo</button>
    <button aria-label="Nova planilha" className="ml-8 mb-[3px]">
      <svg width="17" height="17" viewBox="0 0 17 17" fill="none" stroke="#777">
        <circle cx="8.500" cy="8.500" r="7.500" />
        <path d="M8.500 4.500V12.500M4.500 8.500H12.500" stroke="#666" strokeWidth="2" />
      </svg>
    </button>
    <div className="ml-auto flex h-[27px] shrink-0 items-center">
      <svg className="mr-[15px]" width="2" height="10" viewBox="0 0 2 10"><path d="M0 0H2V2H0ZM0 4H2V6H0ZM0 8H2V10H0Z" fill="#aaa" /></svg>
      <button aria-label="Rolar para a esquerda" className="flex h-[15px] w-4 items-center justify-center border border-[#ababab] bg-white">
        <svg width="4" height="7" viewBox="0 0 4 7"><path d="M4 0V7L0 3.500Z" fill="#555" /></svg>
      </button>
      <div className="-ml-px h-[15px] w-[455px] border border-[#ababab] bg-white" />
      <div className="h-[15px] w-6 bg-[#e8e8e8]" />
      <button aria-label="Rolar para a direita" className="flex h-[15px] w-[15px] items-center justify-center border border-[#ababab] bg-white">
        <svg width="4" height="7" viewBox="0 0 4 7"><path d="M0 0V7L4 3.500Z" fill="#555" /></svg>
      </button>
    </div>
  </div>
);

/* ---------- status bar ---------- */

const StatusBar = () => (
  <footer className="flex h-[22px] shrink-0 items-center bg-[#217346] pr-[9px] pl-[7px] text-white">
    <span className="text-[11px]">PRONTO</span>
    <svg className="ml-5" width="14" height="13" viewBox="0 0 14 13">
      <path d="M7 1H13.500V12.500H2V7" fill="none" stroke="#fff" />
      <circle cx="3" cy="3" r="3" fill="#fff" />
      <path d="M7 1H13V4H7ZM4 6H6V7H4ZM7 6H9V7H7ZM10 6H12V7H10ZM4 8H6V9H4ZM7 8H9V9H7ZM10 8H12V9H10ZM4 10H6V11H4ZM7 10H9V11H7ZM10 10H12V11H10Z" fill="#fff" />
    </svg>
    <div className="ml-auto flex h-full items-center">
      <button aria-label="Normal" className="flex h-[21px] w-[38px] items-center justify-center self-end bg-[#0a6332]">
        <svg width="13" height="13" viewBox="0 0 13 13" fill="none" stroke="#fff" shapeRendering="crispEdges"><path d="M0.500 0.500H12.500V12.500H0.500ZM4.500 0V13M8.500 0V13M0 4.500H13M0 8.500H13" /></svg>
      </button>
      <button aria-label="Layout da Página" className="flex w-[38px] justify-center">
        <svg width="14" height="13" viewBox="0 0 14 13" fill="none" stroke="#fff" shapeRendering="crispEdges"><path d="M0.500 0.500H13.500V12.500H0.500ZM3.500 2.500H10.500V10.500H3.500ZM5 4.500H9M5 6.500H9M5 8.500H9" /></svg>
      </button>
      <button aria-label="Quebra de página" className="flex w-[38px] justify-center">
        <svg width="14" height="13" viewBox="0 0 14 13" shapeRendering="crispEdges"><path d="M0 0H14V13H0Z" fill="#f3f3f3" /><path d="M4 0H5V7H4ZM9 1H13V8H9Z" fill="#217346" /></svg>
      </button>
      <button aria-label="Reduzir" className="ml-[5px] h-[2px] w-[6px] bg-white" />
      <input
        aria-label="Zoom"
        type="range"
        min="0"
        max="100"
        defaultValue="50"
        className="mx-1 h-[11px] w-[100px] appearance-none bg-[linear-gradient(white,white)] bg-[length:100%_1px] bg-center bg-no-repeat [&::-webkit-slider-thumb]:h-[11px] [&::-webkit-slider-thumb]:w-1 [&::-webkit-slider-thumb]:appearance-none [&::-webkit-slider-thumb]:bg-white"
      />
      <button aria-label="Ampliar">
        <svg width="8" height="8" viewBox="0 0 8 8"><path d="M3 0H5V3H8V5H5V8H3V5H0V3H3Z" fill="#fff" /></svg>
      </button>
      <span className="ml-[14px] text-[11px]">100%</span>
    </div>
  </footer>
);

/* ---------- taskbar ---------- */

const WindowsOrb = () => (
  <svg width="40" height="40" viewBox="0 0 40 40">
    <defs>
      <radialGradient id="orb" cx="0.500" cy="0.900" r="0.900">
        <stop offset="0" stopColor="#4fd8ff" />
        <stop offset="0.500" stopColor="#1a6fae" />
        <stop offset="1" stopColor="#1b3f66" />
      </radialGradient>
    </defs>
    <circle cx="20" cy="20" r="18" fill="url(#orb)" stroke="#6f93ad" />
    <path d="M3 17C6 -1 34 -1 37 17C28 12 12 20 3 17Z" fill="#d8e6f0" opacity="0.450" />
    <path d="M13 11C15.500 9.500 17.500 9.500 20 11L18 19C15.500 17.500 13 17.500 11 19Z" fill="#ee5a24" />
    <path d="M21.500 11.500C24 13 27 13 31 10.500L28.500 18.500C25 20.500 22 20.500 19.500 19.500Z" fill="#8cc63f" />
    <path d="M10.500 20.500C12.500 19 15 19 17.500 20.500L15.500 28C13.500 26.500 11 26.500 8 28Z" fill="#3fa9f5" />
    <path d="M19 21C21.500 22.500 24.500 22.500 28 20.500L25.500 28.500C22.500 30.500 19.500 30.500 17 29Z" fill="#fbc62b" />
  </svg>
);

const IeIcon = () => (
  <svg width="32" height="32" viewBox="0 0 32 32" fill="none">
    <defs><linearGradient id="ie" x2="0" y2="1"><stop stopColor="#6fcbff" /><stop offset="0.500" stopColor="#2386d6" /><stop offset="1" stopColor="#0a5ba8" /></linearGradient></defs>
    <path
      d="M28 22C26 27 22 30 17 30C10 30 5.500 25 5.500 18.500C5.500 11.500 10.500 6.500 17 6.500C24 6.500 28.500 11.500 28.500 19.500H12C12.500 23 14.500 25 17.500 25C19.500 25 21 24 22 22ZM12.500 15.500H22C21.500 12.500 20 11 17.200 11C14.500 11 13 12.700 12.500 15.500Z"
      fill="url(#ie)"
    />
    <path d="M6 22C2 27 0.500 31 3.500 31C6.500 31 13 26 20 18C27 10 31.500 4 30 2C27.500 -0.500 18 4 11 12C17 6 25 1.500 27.500 3.500C28.500 5 25 10 19 17C12 24 6 29 4.500 28C3.500 27.500 4 25 6 22Z" fill="#f2bd2c" />
  </svg>
);

const WmpIcon = () => (
  <svg width="28" height="28" viewBox="0 0 28 28">
    <path d="M19 3H27V26H19Z" fill="#4c94bd" />
    <path d="M20 3H22V26H20ZM24 3H25V26H24Z" fill="#a7d3ea" />
    <path d="M1 2H20V27H1Z" fill="#7db8d6" />
    <circle cx="11" cy="15" r="9" fill="#f08122" stroke="#fbb168" />
    <path d="M8 9.500L17 15L8 20.500Z" fill="#fff" />
  </svg>
);

const ChromeIcon = () => (
  <svg width="30" height="30" viewBox="0 0 30 30">
    <circle cx="15" cy="15" r="15" fill="#fbc116" />
    <path d="M2 7.500A15 15 0 0 1 28 7.500H15L9 18.500Z" fill="#e33b2e" />
    <path d="M2 7.500A15 15 0 0 0 14 30L21 18.500H9Z" fill="#2da94f" />
    <path d="M28 7.500H15L21.500 18.500L14 30A15 15 0 0 0 28 7.500Z" fill="#fbc116" />
    <circle cx="15" cy="15" r="7" fill="#fff" />
    <circle cx="15" cy="15" r="5.500" fill="#3f7ee8" />
  </svg>
);

const RemoteIcon = () => (
  <svg width="32" height="32" viewBox="0 0 32 32">
    <ellipse cx="17" cy="28" rx="9" ry="3" fill="#d4d9dd" />
    <path d="M14 19H22L20 28H15Z" fill="#aeb5bb" />
    <path d="M7 1L31 3L28 24L6 18Z" fill="#dfe5ea" />
    <path d="M9 2.500L29 4.500L26.500 21.500L8 17Z" fill="#1c3fa8" />
    <path d="M19 4L29 4.500L26.500 21.500L24 21Z" fill="#5f8be8" />
    <path d="M1 8H23V17H1Z" fill="#e9f4ff" stroke="#2b7fc2" />
    <path d="M3 10.500H21M3 12.500H21M5 15H19" stroke="#2b7fc2" strokeDasharray="2 1" />
  </svg>
);

const CrossIcon = () => (
  <svg width="34" height="34" viewBox="0 0 34 34">
    <path d="M1 1C8 3 12 6 17 6C22 6 26 3 33 1C31 8 27 12 27 17C27 22 31 26 33 33C26 31 22 28 17 28C12 28 8 31 1 33C3 26 7 22 7 17C7 12 3 8 1 1Z" fill="#f7c51e" />
    <path d="M4.500 4C10 6 13 8.500 17 8.500C21 8.500 24 6 29.500 4C28 9 24.500 13 24.500 17C24.500 21 28 25 29.500 30C24 28 21 25.500 17 25.500C13 25.500 10 28 4.500 30C6 25 9.500 21 9.500 17C9.500 13 6 9 4.500 4Z" fill="#e3201d" />
    <path d="M17 9V14M17 20V25M10 17H14M20 17H24M13.500 13.500H20.500V20.500H13.500ZM17 14V20M14 17H20" stroke="#f7c51e" strokeWidth="1.200" fill="none" />
  </svg>
);

const FilmIcon = () => (
  <svg width="32" height="32" viewBox="0 0 32 32">
    <defs><linearGradient id="film" x2="0" y2="1"><stop stopColor="#3e4b9e" /><stop offset="1" stopColor="#a8a3f2" /></linearGradient></defs>
    <path d="M0.500 0.500H31.500V31.500H0.500Z" fill="url(#film)" stroke="#fff" />
    <path d="M5 1H27V31H5Z" fill="#16263f" />
    <path d="M8 1H24V15H8ZM8 17H24V29H8Z" fill="#9cc9f2" />
    <path d="M9 1H23L20 11H12Z" fill="#e6f3ff" />
    <path d="M6.500 2V31M25.500 2V31" stroke="#e8ecf5" strokeDasharray="2 2" />
  </svg>
);

const FirefoxIcon = () => (
  <svg width="32" height="32" viewBox="0 0 32 32">
    <defs>
      <linearGradient id="fx" x1="0.800" y1="0" x2="0.300" y2="1"><stop stopColor="#ffe14a" /><stop offset="0.450" stopColor="#ff8a16" /><stop offset="0.750" stopColor="#ff3b47" /><stop offset="1" stopColor="#e31587" /></linearGradient>
      <radialGradient id="fxglobe"><stop stopColor="#6a4be0" /><stop offset="1" stopColor="#9b35d6" /></radialGradient>
    </defs>
    <path d="M2 8C3 6 4 4.500 5 4L7 7C9 6 11 6 13 6.500C14 5 16 2.500 19.500 0.500C21 4 24 5 25 9L27.500 8C30 11 31 14 31 18C31 26 24 31.500 16 31.500C8 31.500 1 25.500 1 17.500C1 14 1.500 11 2 8Z" fill="url(#fx)" />
    <circle cx="16" cy="17" r="7" fill="url(#fxglobe)" />
    <path d="M7 12C9 10 12 11 14 12C17 12 18 13 16.500 14.500C14 16 12 15 10 18C8 16 7 14 7 12Z" fill="#ffab1e" />
  </svg>
);

const FolderIcon = () => (
  <svg width="34" height="32" viewBox="0 0 34 32">
    <path d="M2 3H5V1H14V4H31V27H2Z" fill="#f0d272" stroke="#b08d2c" strokeWidth="0.800" />
    <path d="M4 3H12M14 5H21M21 7H29" stroke="#fff" strokeWidth="2" />
    <path d="M5 2.500H9" stroke="#29b34a" strokeWidth="2" />
    <path d="M12 4.500H16" stroke="#d8372b" strokeWidth="2" />
    <path d="M1 7H17L19 9H33V28H1Z" fill="#f9e8a0" stroke="#c8a84a" strokeWidth="0.800" />
    <path d="M20 7.500H31" stroke="#fff" strokeWidth="2" />
    <path d="M21 7.500H25" stroke="#2c8ad8" strokeWidth="2" />
    <path d="M5 31V19C5 17.500 6 17 7 17H27C28.500 17 29 18 29 19V31H23V25H11V31Z" fill="#7cc7ea" stroke="#3b93c0" strokeWidth="0.800" />
    <path d="M7 19H27V21H7Z" fill="#c5e9f8" />
    <path d="M9 15L9.700 19.300L14 20L9.700 20.700L9 25L8.300 20.700L4 20L8.300 19.300Z" fill="#fff" />
  </svg>
);

const apps: [string, React.ReactNode, string][] = [
  ["Internet Explorer", <IeIcon />, ""],
  ["Windows Media Player", <WmpIcon />, ""],
  ["Google Chrome", <ChromeIcon />, ""],
  ["Teclado virtual", <RemoteIcon />, ""],
  ["Ferramenta CAD", <CrossIcon />, ""],
  ["Editor de vídeo", <FilmIcon />, ""],
  ["Firefox", <FirefoxIcon />, ""],
  ["Windows Explorer", <FolderIcon />, "rounded-[2px] border border-[#8b8f93] bg-[linear-gradient(150deg,#777a7d_0%,#3f4347_45%,#17191c_50%,#2b2f31_100%)]"],
  ["Microsoft Excel", <ExcelLogo size={30} />, "rounded-[2px] border border-[#c5c7c9] bg-[linear-gradient(150deg,#d5d6d7_0%,#9b9d9f_48%,#6f7275_52%,#9c9fa1_100%)]"],
];

const Taskbar = () => (
  <div className="flex h-10 shrink-0 items-center border-t border-[#59646c] bg-[linear-gradient(to_right,#0b1720_0,#0a0e16_260px,#0a0e16_75%,#05080a_100%)] text-white">
    <button aria-label="Iniciar" className="ml-[7px] w-10 shrink-0"><WindowsOrb /></button>
    <div className="ml-[13px] flex h-full gap-1">
      {apps.map(([name, icon, style]) => (
        <button key={name} aria-label={name} className={"flex h-[38px] w-[58px] items-center justify-center " + style}>{icon}</button>
      ))}
    </div>
    <div className="ml-auto flex h-full items-center">
      <span className="pb-1 text-[#ddd]">PT</span>
      <button aria-label="Mostrar ícones ocultos" className="ml-[17px]"><svg width="7" height="4" viewBox="0 0 7 4"><path d="M0 4H7L3.500 0Z" fill="#fff" /></svg></button>
      <svg className="ml-[14px]" width="15" height="16" viewBox="0 0 15 16">
        <path d="M1.500 1V16" stroke="#fff" strokeWidth="1.500" />
        <path d="M3 3C6 1.500 8 4.500 13.500 3V9C9 10 6 7.500 3 9Z" fill="#fff" />
        <circle cx="10.500" cy="11" r="4.500" fill="#d6281d" />
        <path d="M8.500 9L12.500 13M12.500 9L8.500 13" stroke="#fff" strokeWidth="1.500" />
      </svg>
      <svg className="ml-[9px]" width="15" height="12" viewBox="0 0 15 12">
        <path d="M0 9H2V11H0ZM3 8H5V11H3ZM6 6H8V11H6Z" fill="#fff" />
        <path d="M9 3H11V11H9ZM12 1H14V11H12Z" fill="#777" />
      </svg>
      <svg className="ml-[9px]" width="16" height="14" viewBox="0 0 16 14" fill="none" stroke="#fff">
        <path d="M1 4.500H3L7 1V13L3 9.500H1Z" fill="#fff" />
        <path d="M9 4.500C10 6 10 8 9 9.500M11 3C12.500 5 12.500 9 11 11M13 1.500C15.500 4.500 15.500 9.500 13 12.500" />
      </svg>
      <svg className="ml-[9px]" width="14" height="15" viewBox="0 0 14 15">
        <path d="M1.500 3V1H6.500V13H1.500V6" stroke="#ddd" fill="none" />
        <path d="M8 1V4M12 1V4" stroke="#fff" strokeWidth="1.500" />
        <path d="M6 4H14V7C14 9 12 10 10 10V13H7V9C6 8 6 7 6 4Z" fill="#fff" />
        <path d="M1 7L8 14M8 7L1 14" stroke="#e0140c" strokeWidth="2.200" />
      </svg>
      <div className="ml-[11px] w-[74px] text-center leading-[17px] whitespace-nowrap">
        <div>17:16</div>
        <div>23/07/2022</div>
      </div>
      <button aria-label="Mostrar área de trabalho" className="ml-1 h-[37px] w-[13px] border border-[#59646c] bg-[linear-gradient(160deg,#4a4f53,#101214_45%,#26292b)]" />
    </div>
  </div>
);

export default function App() {
  return (
    <div className="flex h-screen flex-col overflow-hidden bg-white font-['Open_Sans','Noto_Sans',sans-serif] text-[12px] leading-4">
      <TitleBar />
      <RibbonTabs />
      <Ribbon />
      <FormulaBar />
      <Sheet />
      <SheetTabs />
      <StatusBar />
      <Taskbar />
    </div>
  );
}
